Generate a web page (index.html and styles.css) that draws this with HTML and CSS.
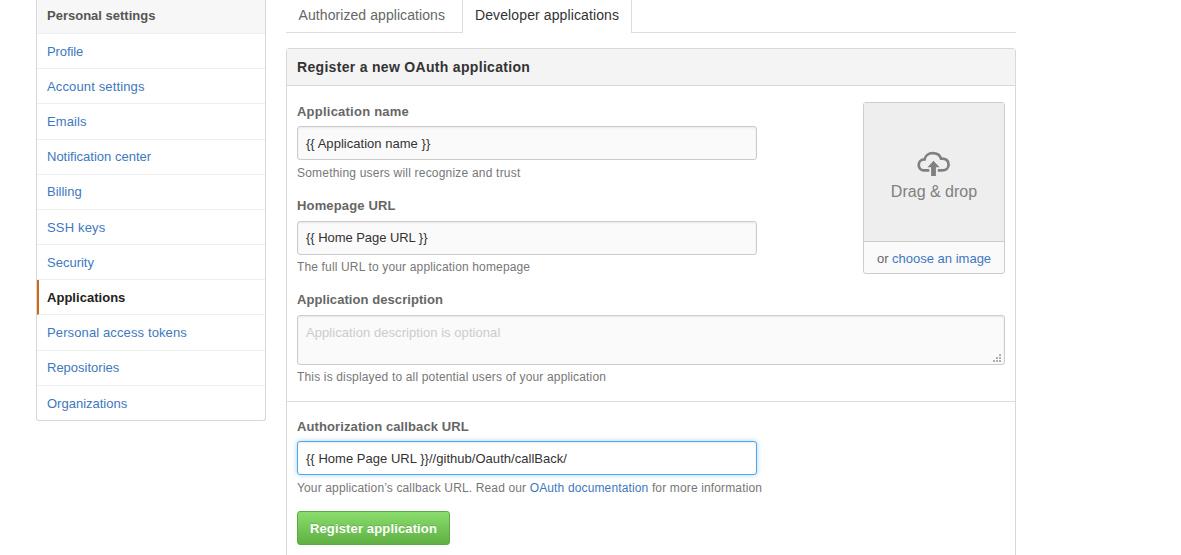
FILE: index.html
```html
<!DOCTYPE html>
<html lang="en">
<head>
<meta charset="utf-8">
<title>Register a new OAuth application</title>
<link rel="stylesheet" href="styles.css">
</head>
<body>
<div class="page">
  <nav class="menu">
    <h3 class="menu-heading"><span class="t-head">Personal settings</span></h3>
    <a class="menu-item" href="#"><span class="t-profile">Profile</span></a>
    <a class="menu-item" href="#"><span class="t-account">Account settings</span></a>
    <a class="menu-item" href="#"><span class="t-emails">Emails</span></a>
    <a class="menu-item" href="#"><span class="t-notify">Notification center</span></a>
    <a class="menu-item" href="#"><span class="t-billing">Billing</span></a>
    <a class="menu-item" href="#"><span class="t-ssh">SSH keys</span></a>
    <a class="menu-item" href="#"><span class="t-security">Security</span></a>
    <a class="menu-item selected" href="#"><span class="t-apps">Applications</span></a>
    <a class="menu-item" href="#"><span class="t-tokens">Personal access tokens</span></a>
    <a class="menu-item" href="#"><span class="t-repos">Repositories</span></a>
    <a class="menu-item" href="#"><span class="t-orgs">Organizations</span></a>
  </nav>
  <main class="content">
    <div class="tabs">
      <a class="tab tab-first" href="#"><span class="t-auth">Authorized applications</span></a>
      <a class="tab tab-active" href="#"><span class="t-dev">Developer applications</span></a>
    </div>
    <section class="box">
      <h3 class="box-title"><span class="t-title">Register a new OAuth application</span></h3>
      <form class="box-body">
        <div class="top-row">
          <div class="fields">
            <label class="label"><span class="t-lname">Application name</span></label>
            <div class="input"><span class="t-vname">{{ Application name }}</span></div>
            <p class="note"><span class="t-nname">Something users will recognize and trust</span></p>
            <label class="label label-url"><span class="t-lurl">Homepage URL</span></label>
            <div class="input input-url"><span class="t-vurl">{{ Home Page URL }}</span></div>
            <p class="note note-tight"><span class="t-nurl">The full URL to your application homepage</span></p>
          </div>
          <div class="upload">
            <div class="drop">
              <svg class="cloud" width="34" height="26" viewBox="0 0 34 26">
                <path d="M12.3 19.4H7.6C4.4 19.4 1.7 17.2 1.7 13.9 1.7 10.8 4.2 8.4 7.6 8.4 8.2 4.8 11.5 2.2 15.7 2.2 19.8 2.2 22.9 4.2 24 7.6 28.7 7.1 31.6 9.7 31.6 13.4 31.6 17 29 19.4 25.3 19.4H20.8" fill="none" stroke="#808080" stroke-width="2.7"/>
                <path d="M16.5 9.8 22.5 16.2H18.9V25H14.1V16.2H10.5Z" fill="#808080"/>
              </svg>
              <span class="drop-text t-drag">Drag &amp; drop</span>
            </div>
            <div class="choose"><span class="t-choose">or <a href="#">choose an image</a></span></div>
          </div>
        </div>
        <label class="label label-desc"><span class="t-ldesc">Application description</span></label>
        <div class="input textarea">
          <span class="placeholder t-vdesc">Application description is optional</span>
          <svg class="grip" width="8" height="8" viewBox="0 0 8 8" fill="#b0b0b0">
            <path d="M6 0h2v2H6zM3 3h2v2H3zM6 3h2v2H6zM0 6h2v2H0zM3 6h2v2H3zM6 6h2v2H6z"/>
          </svg>
        </div>
        <p class="note note-tight"><span class="t-ndesc">This is displayed to all potential users of your application</span></p>
        <hr class="rule">
        <label class="label label-callback"><span class="t-lcb">Authorization callback URL</span></label>
        <div class="input focused"><span class="t-vcb">{{ Home Page URL }}//github/Oauth/callBack/</span></div>
        <p class="note note-callback"><span class="t-ncb">Your application’s callback URL. Read our <a href="#">OAuth documentation</a> for more information</span></p>
        <button class="button" type="button"><span class="t-btn">Register application</span></button>
      </form>
    </section>
  </main>
</div>
</body>
</html>
```
FILE: styles.css
```css
* { box-sizing: border-box; }
html { overflow: hidden; }
body {
  margin: 0;
  height: 555px;
  overflow: hidden;
  background: #fff;
  color: #333;
  font: 13px/18px "Liberation Sans", Arial, sans-serif;
}
a { color: #4078c0; text-decoration: none; }
h3, p { margin: 0; }
span { white-space: nowrap; }

.page { display: flex; align-items: flex-start; gap: 20px; padding-left: 36px; }

.menu {
  width: 230px;
  height: 421px;
  border: 1px solid #d8d8d8;
  border-top: 0;
  border-radius: 0 0 3px 3px;
}
.menu-heading {
  height: 34px;
  padding: 7px 10px 0;
  border-bottom: 1px solid #eee;
  background: #f7f7f7;
  color: #555;
  font-size: 13px;
  line-height: 18px;
}
.menu-item {
  display: block;
  height: 35.18px;
  padding: 8.8px 10px 0;
  border-bottom: 1px solid #eee;
}
.menu-item:last-child { border-bottom: 0; }
.selected {
  padding-left: 8px;
  border-left: 2px solid #d26911;
  color: #222;
  font-weight: bold;
}

.content { width: 730px; }
.tabs {
  display: flex;
  height: 33px;
  margin-bottom: 15px;
  border-bottom: 1px solid #ddd;
  font-size: 14px;
}
.tab { height: 33px; padding: 6px 12px 0; color: #666; }
.tab-first { width: 176px; padding-left: 12.6px; }
.tab-active {
  width: 170px;
  border: solid #ddd;
  border-width: 0 1px;
  background: #fff;
  color: #333;
}

.box { height: 530px; border: 1px solid #d8d8d8; border-radius: 3px; }
.box-title {
  height: 37px;
  padding: 9px 10px 0;
  border-bottom: 1px solid #d8d8d8;
  background: #f4f4f4;
  font-size: 14px;
  line-height: 18px;
}
.box-body { padding: 16px 10px 0; }
.top-row { display: flex; justify-content: space-between; align-items: flex-start; height: 188px; }
.fields { width: 460px; }
.label { display: block; height: 24px; padding-top: 1px; color: #666; font-weight: bold; line-height: 18px; }
.label-url { margin-top: 14px; height: 25px; }
.input {
  height: 34px;
  padding: 8px 8px 6px;
  border: 1px solid #ccc;
  border-radius: 3px;
  background: #fafafa;
  box-shadow: inset 0 1px 2px rgba(0, 0, 0, .075);
}
.input-url { padding-top: 7px; }
.note { height: 18px; margin-top: 4px; color: #777; font-size: 12px; line-height: 18px; }
.note-tight { margin-top: 3px; }
.label-desc { height: 25px; }
.textarea { display: flex; justify-content: space-between; align-items: flex-end; height: 50px; padding: 8px 2px 2px 8px; }
.placeholder { align-self: flex-start; color: #ccc; }
.grip { margin-right: 1px; }
.rule { height: 1px; margin: 15px -10px 0; border: 0; background: #ddd; }
.label-callback { margin-top: 15px; }
.focused {
  width: 460px;
  border-color: #51a7e8;
  background: #fff;
  box-shadow: inset 0 1px 2px rgba(0, 0, 0, .075), 0 0 5px rgba(81, 167, 232, .5);
}

.upload {
  width: 142px;
  height: 172px;
  border: 1px solid #ccc;
  border-radius: 3px;
  background: #fafafa;
}
.drop {
  display: flex;
  flex-direction: column;
  align-items: center;
  height: 138px;
  padding-top: 48px;
  background: #eee;
  color: #808080;
  font-size: 16px;
}
.drop-text { margin-top: 6px; }
.choose { height: 32px; padding-top: 8px; border-top: 1px solid #ccc; color: #666; text-align: center; }

.button {
  display: block;
  width: 153px;
  height: 34px;
  margin-top: 14px;
  padding: 1px 0 0;
  border: 1px solid #5ca941;
  border-radius: 3px;
  background: linear-gradient(#8add6d, #60b044);
  color: #fff;
  font: bold 13px/18px "Liberation Sans", Arial, sans-serif;
  text-shadow: 0 -1px 0 rgba(0, 0, 0, .15);
}

/* Per-string tracking */
.t-profile { letter-spacing: -.1px; }
.t-account { letter-spacing: .14px; }
.t-emails { letter-spacing: .1px; }
.t-ssh { letter-spacing: .17px; }
.t-tokens { letter-spacing: .12px; }
.t-apps { letter-spacing: .03px; }
.t-auth { letter-spacing: .07px; }
.t-dev { letter-spacing: .11px; }
.t-title { letter-spacing: .31px; }
.t-lname { letter-spacing: .23px; }
.t-lurl { letter-spacing: .16px; }
.t-ldesc { letter-spacing: .07px; }
.t-lcb { letter-spacing: .11px; }
.t-vurl { letter-spacing: -.05px; }
.t-vname { letter-spacing: .03px; }
.t-vdesc { letter-spacing: .06px; }
.t-vcb { letter-spacing: .03px; }
.t-nname { letter-spacing: .2px; }
.t-nurl { letter-spacing: .15px; }
.t-ndesc { letter-spacing: .16px; }
.t-ncb { letter-spacing: .14px; }
.t-btn { letter-spacing: .14px; }
```
